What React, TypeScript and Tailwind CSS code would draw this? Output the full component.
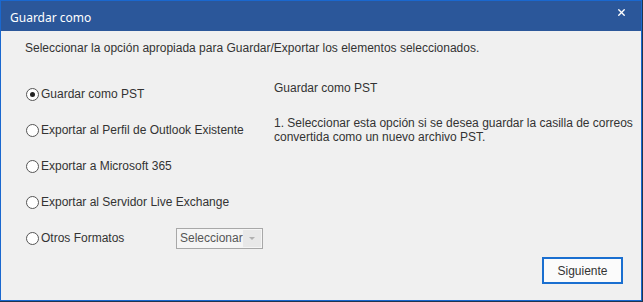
import { X } from 'lucide-react'

const options = [
  'Guardar como PST',
  'Exportar al Perfil de Outlook Existente',
  'Exportar a Microsoft 365',
  'Exportar al Servidor Live Exchange',
]

const Radio = ({ checked }: { checked?: boolean }) => (
  <span className="w-[13px] h-[13px] rounded-full border border-[#555] bg-white flex items-center justify-center shrink-0">
    {checked && <span className="w-[5px] h-[5px] rounded-full bg-[#222]" />}
  </span>
)

export default function App() {
  return (
    <div className="w-[643px] h-[302px] bg-[#1f3550] overflow-hidden">
      <div className="w-[642px] h-[301px] border border-[#1a68cf] bg-[#f0f0f0] flex flex-col">
        {/* title bar */}
        <div className="h-[30px] bg-[#2b579a] flex items-center justify-between pl-[9px] pr-[14px] shrink-0">
          <span className="text-white text-[12px] pt-[3px]" style={{ fontFamily: '"Noto Sans", sans-serif' }}>
            Guardar como
          </span>
          <X size={11} strokeWidth={3} className="text-white mb-[8px]" />
        </div>

        <div
          className="flex-1 flex flex-col text-[12px] text-[#333]"
          style={{ fontFamily: '"Liberation Sans", Arial, sans-serif' }}
        >
          <p className="pl-[24px] pt-[10px] leading-[14px]">
            Seleccionar la opción apropiada para Guardar/Exportar los elementos seleccionados.
          </p>

          <div className="flex mt-[32px]">
            <div className="w-[273px] pl-[25px] flex flex-col gap-[22px]">
              {options.map((o, i) => (
                <label key={o} className="flex items-center gap-[2px] h-[14px] leading-[14px]">
                  <Radio checked={i === 0} />
                  <span>{o}</span>
                </label>
              ))}
              <div className="flex items-center h-[14px]">
                <label className="flex items-center gap-[2px] w-[150px]">
                  <Radio />
                  <span>Otros Formatos</span>
                </label>
                <div className="w-[87px] h-[21px] border border-[#a8a8a8] bg-[#f5f5f5] flex items-center p-[1px]">
                  <span className="flex-1 pl-[2px] text-[#555]">Seleccionar</span>
                  <span className="w-[18px] h-full bg-[#e8e8e8] flex items-center justify-center">
                    <svg width="6" height="3" viewBox="0 0 6 3">
                      <path d="M0 0h6L3 3z" fill="#b0b0b0" />
                    </svg>
                  </span>
                </div>
              </div>
            </div>

            <div className="flex flex-col leading-[14px] -mt-[6px]">
              <p>Guardar como PST</p>
              <p className="mt-[21px] w-[362px]">
                1. Seleccionar esta opción si se desea guardar la casilla de correos convertida como un nuevo archivo PST.
              </p>
            </div>
          </div>

          <div className="flex justify-end pr-[18px] mt-auto mb-[16px]">
            <button className="w-[81px] h-[27px] border-2 border-[#1a6fd0] bg-[#fbfbfb] text-[#333]">
              Siguiente
            </button>
          </div>
        </div>
      </div>
    </div>
  )
}
